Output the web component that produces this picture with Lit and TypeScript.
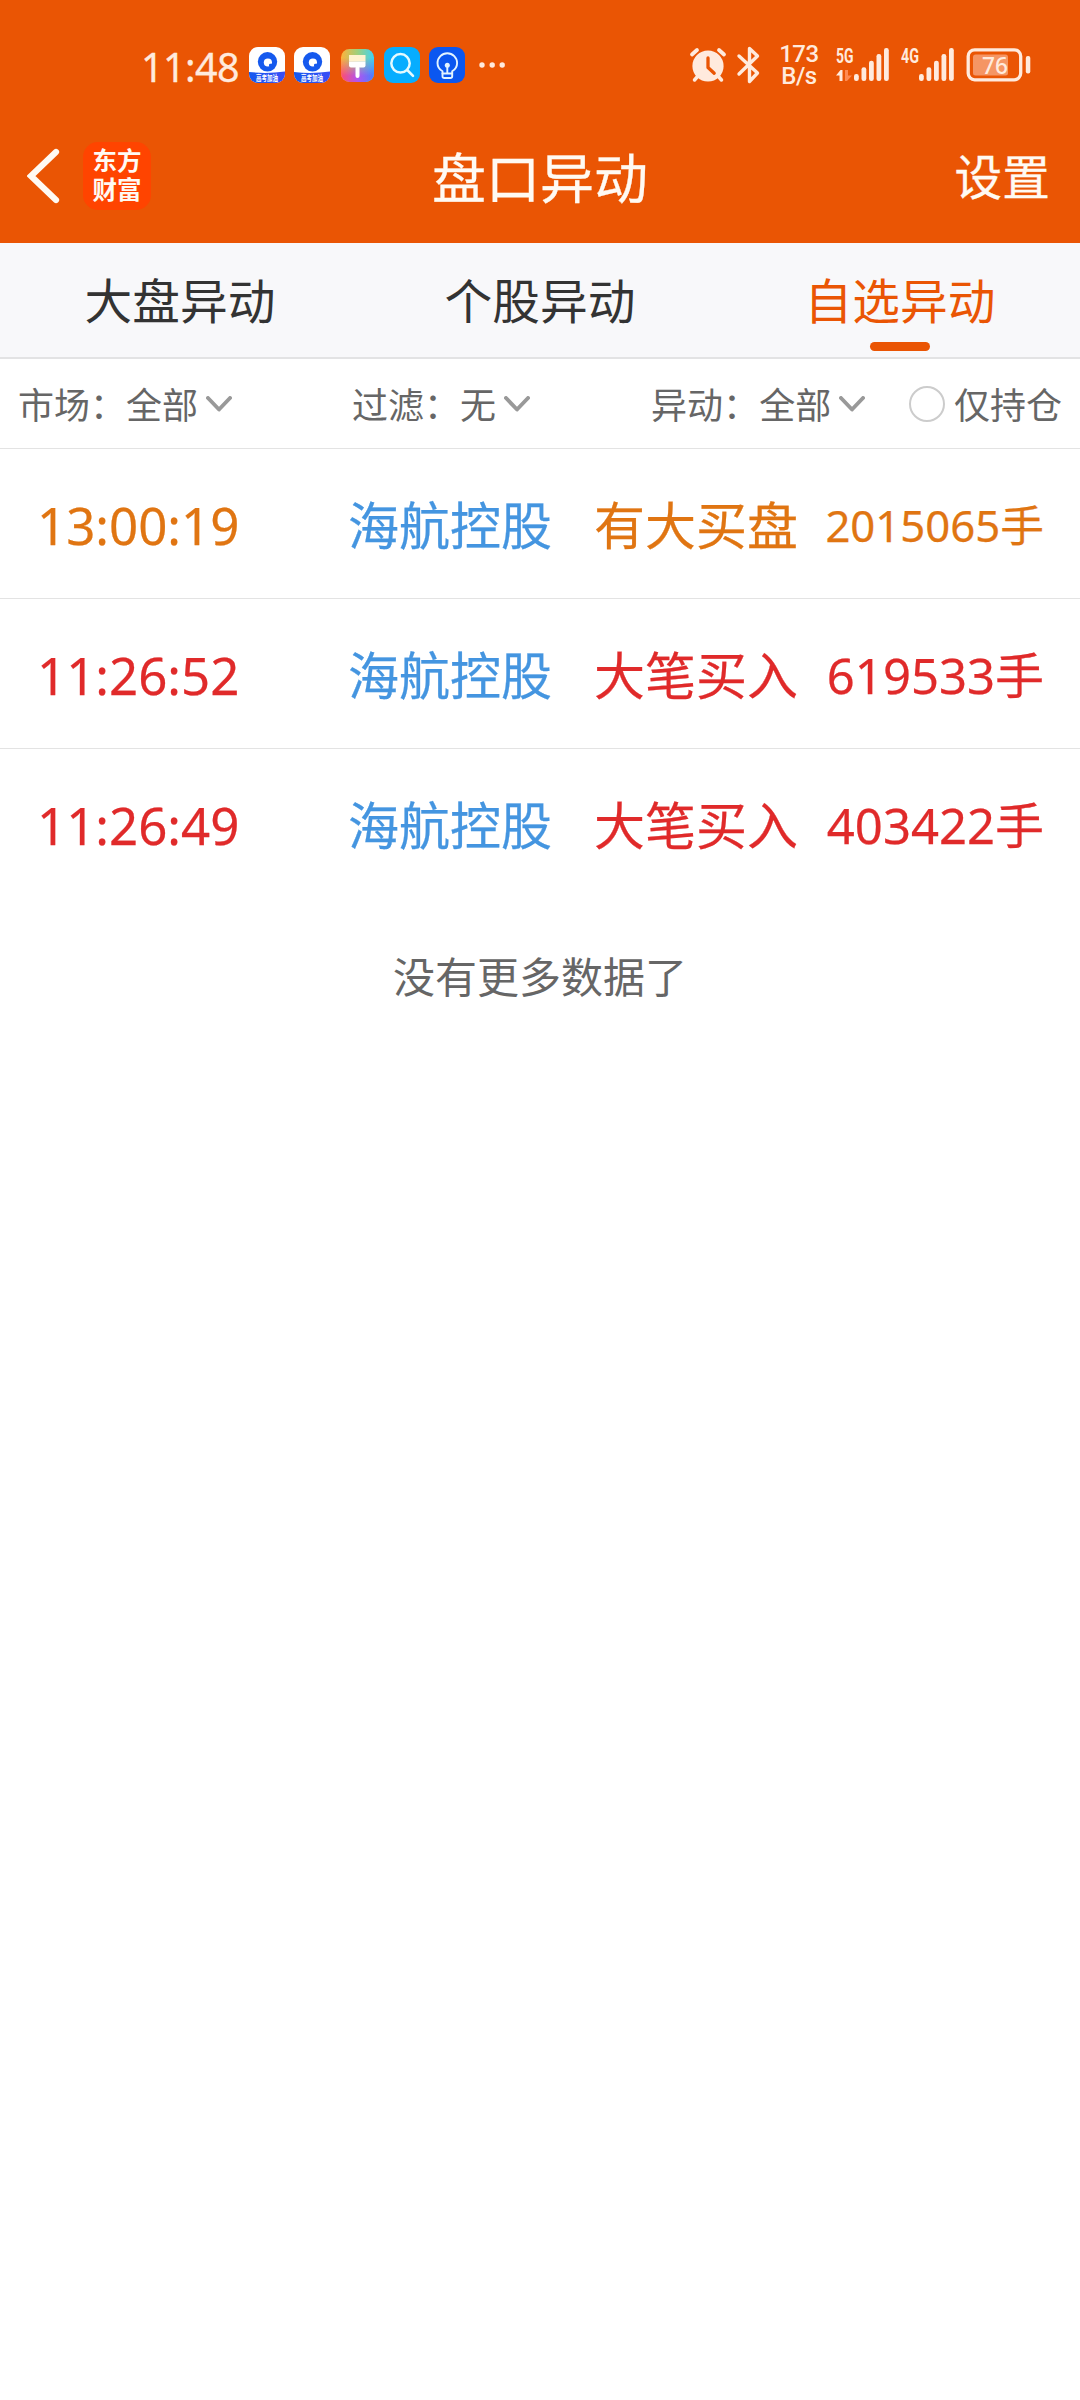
import { LitElement, html, css, svg } from "lit";
import { customElement, property } from "lit/decorators.js";
import { classMap } from "lit/directives/class-map.js";

type Entry = { time: string; name: string; event: string; volume: string; tone: string; compact?: boolean };

const ENTRIES: Entry[] = [
  { time: "13:00:19", name: "海航控股", event: "有大买盘", volume: "2015065手", tone: "amber", compact: true },
  { time: "11:26:52", name: "海航控股", event: "大笔买入", volume: "619533手", tone: "red" },
  { time: "11:26:49", name: "海航控股", event: "大笔买入", volume: "403422手", tone: "red" },
];

const TABS = ["大盘异动", "个股异动", "自选异动"];

const CREAM = "#ffeadd";

@customElement("status-bar")
export class StatusBar extends LitElement {
  static styles = css`
    :host {
      display: flex;
      height: 108px;
      padding: 22px 49px 0 141px;
      box-sizing: border-box;
      align-items: center;
      color: #ffeadd;
      font-family: "Noto Sans", "Noto Sans CJK SC", sans-serif;
    }
    svg { display: block; flex: none; overflow: visible; }
    .clock {
      width: 108px;
      padding-top: 3px;
      font-size: 39.5px;
      line-height: 44px;
      letter-spacing: -0.6px;
      white-space: nowrap;
      -webkit-text-stroke: 0.3px #ffeadd;
    }
    .apps { display: flex; align-items: center; gap: 9px; }
    .more { margin-left: 14px; }
    .system { display: flex; align-items: center; margin-left: auto; }
    .bt { margin-left: 11px; }
    .speed { width: 40px; margin: 0 0 0 19px; font: 500 24px/22px Roboto, sans-serif; text-align: center; letter-spacing: -0.4px; }
    .sig5 { margin-left: 17px; }
    .sig4 { margin-left: 12px; }
    .battery { margin-left: 12px; }
    .label { font: 700 20px Roboto, sans-serif; fill: #ffeadd; }
    .level { font: 500 24px "Noto Sans", sans-serif; fill: #ffeadd; }
    .tag { font: 700 7.5px "Noto Sans CJK SC", sans-serif; fill: #fff; }
  `;

  private browserIcon(id: string) {
    return html`<svg width="36" height="36" viewBox="0 0 36 36">
      <defs>
        <clipPath id=${id}><rect width="36" height="36" rx="9"></rect></clipPath>
        <linearGradient id=${id + "g"}><stop stop-color="#1559ee"></stop><stop offset="1" stop-color="#3b4df6"></stop></linearGradient>
      </defs>
      <g clip-path="url(#${id})">
        <rect width="36" height="36" fill="#fff"></rect>
        <path d="M0 25Q18 27 36 24.500V36H0Z" fill="url(#${id}g)"></path>
        <circle cx="18.500" cy="14.800" r="9.700" fill="#1559ee"></circle>
        <circle cx="18.900" cy="15.500" r="4.100" fill="#fff"></circle>
        <path d="M20 19.800V18Q20 16.800 21.200 16.800H23.500V19.800Z" fill="#1559ee"></path>
        <text class="tag" x="18" y="34" text-anchor="middle" textLength="22" lengthAdjust="spacingAndGlyphs" font-style="italic">高考加油</text>
      </g>
    </svg>`;
  }

  private bars() {
    return [7, 13.7, 20.3, 27, 33].map(
      (h, i) => svg`<rect x=${i * 7.5} y=${33 - h} width="4.8" height=${h} rx="2.2" fill=${CREAM}></rect>`
    );
  }

  render() {
    return html`
      <div class="clock">11:48</div>
      <div class="apps">
        ${this.browserIcon("a")} ${this.browserIcon("b")}
        <svg width="36" height="36" viewBox="0 0 36 36">
          <defs>
            <linearGradient id="p1" x1="0" y1="0" x2="1" y2="0"><stop stop-color="#ffb13c"></stop><stop offset=".5" stop-color="#9ed07c"></stop><stop offset="1" stop-color="#3fd3f4"></stop></linearGradient>
            <linearGradient id="p2" x1="0" y1="0" x2="1" y2="0"><stop stop-color="#ff4d6d"></stop><stop offset=".5" stop-color="#b354ee"></stop><stop offset="1" stop-color="#4a7dff"></stop></linearGradient>
            <linearGradient id="pm" x1="0" y1="0" x2="0" y2="1"><stop offset=".3" stop-color="#000"></stop><stop offset=".8" stop-color="#fff"></stop></linearGradient>
            <mask id="pk"><rect width="36" height="36" fill="url(#pm)"></rect></mask>
          </defs>
          <rect x="2" y="2" width="33" height="33" rx="8.5" fill="url(#p1)"></rect>
          <rect x="2" y="2" width="33" height="33" rx="8.5" fill="url(#p2)" mask="url(#pk)"></rect>
          <path d="M10 8H26.500V14.500H10Z" fill="#fff3cf"></path>
          <path d="M10 14.500H26.500V18.500Q26.500 20.500 24.500 20.500H12Q10 20.500 10 18.500Z" fill="#fff"></path>
          <rect x="16.500" y="19" width="4" height="12" rx="2" fill="#fff"></rect>
        </svg>
        <svg width="36" height="36" viewBox="0 0 36 36">
          <rect width="36" height="36" rx="9" fill="#06adff"></rect>
          <circle cx="16.500" cy="16.300" r="9.200" fill="none" stroke="#e4faff" stroke-width="2.500"></circle>
          <path d="M23.200 23L29 28.800" stroke="#e4faff" stroke-width="2.600" stroke-linecap="round"></path>
        </svg>
        <svg width="36" height="36" viewBox="0 0 36 36">
          <rect width="36" height="36" rx="9" fill="#0b57f0"></rect>
          <g fill="none" stroke="#e3f4ff" stroke-width="1.900" stroke-linecap="round" stroke-linejoin="round">
            <path d="M13.500 26.500V24.300Q8.500 21.300 8.500 16a9.800 9.800 0 0 1 19.600 0Q28.100 21.300 23.200 24.300V26.500Z"></path>
            <path d="M13.500 26.500V29.200Q13.500 31 15.300 31H21.300Q23.200 31 23.200 29.200V26.500M18.300 26V19"></path>
          </g>
          <circle cx="18.300" cy="18.300" r="2.500" fill="#e3f4ff"></circle>
        </svg>
      </div>
      <svg class="more" width="26" height="6" viewBox="0 0 26 6" fill=${CREAM}>
        <circle cx="3" cy="3" r="2.700"></circle><circle cx="13.200" cy="3" r="2.700"></circle><circle cx="23.200" cy="3" r="2.700"></circle>
      </svg>
      <div class="system">
        <svg width="36" height="36" viewBox="0 0 36 36">
          <path d="M8 29L4.500 33M28 29L31.500 33" stroke=${CREAM} stroke-width="3.500" stroke-linecap="round"></path>
          <path d="M2 7.500L7 3M34 7.500L29 3" stroke=${CREAM} stroke-width="3.800" stroke-linecap="round"></path>
          <circle cx="18" cy="19" r="15.600" fill=${CREAM}></circle>
          <path d="M18 11V20.500L24.200 26.200" fill="none" stroke="#ea5504" stroke-width="3.300" stroke-linecap="round" stroke-linejoin="round"></path>
        </svg>
        <svg class="bt" width="23" height="38" viewBox="0 0 23 38">
          <path d="M2 10L20.500 27L12.500 35.500V2.500L20.500 10L2 28" fill="none" stroke=${CREAM} stroke-width="3.400" stroke-linecap="round" stroke-linejoin="round"></path>
        </svg>
        <div class="speed"><div>173</div><div>B/s</div></div>
        <svg class="sig5" width="53" height="34" viewBox="0 0 53 34">
          <text class="label" x="0" y="14.500" textLength="17.500" lengthAdjust="spacingAndGlyphs">5G</text>
          <path d="M0 27.500L4.500 22H6.500V33H3.500V27.500Z" fill=${CREAM}></path>
          <path d="M9 22H12V27.500H16L11 33H9Z" fill="#ff8a52"></path>
          <g transform="translate(18)">${this.bars()}</g>
        </svg>
        <svg class="sig4" width="53" height="34" viewBox="0 0 53 34">
          <text class="label" x="0" y="14.500" textLength="18" lengthAdjust="spacingAndGlyphs">4G</text>
          <g transform="translate(18)">${this.bars()}</g>
        </svg>
        <svg class="battery" width="65" height="34" viewBox="0 0 65 34">
          <rect x="2.200" y="1.800" width="52.500" height="30" rx="6.500" fill="none" stroke=${CREAM} stroke-width="3.300"></rect>
          <rect x="7" y="6.500" width="35" height="21" rx="2.500" fill="#f59564"></rect>
          <text class="level" x="16" y="26" textLength="26" lengthAdjust="spacingAndGlyphs">76</text>
          <rect x="59.800" y="8" width="4.500" height="17.500" rx="2" fill=${CREAM}></rect>
        </svg>
      </div>
    `;
  }
}

@customElement("filter-select")
export class FilterSelect extends LitElement {
  @property() label = "";
  @property() value = "";

  static styles = css`
    :host { display: flex; align-items: center; white-space: nowrap; }
    .text { padding-bottom: 2px; }
    .chevron { display: block; margin-left: 8px; }
  `;

  render() {
    return html`<span class="text">${this.label}：${this.value}</span>
      <svg class="chevron" width="26" height="16" viewBox="0 0 26 16">
        <path d="M2 2L13 13.500L24 2" fill="none" stroke="#999" stroke-width="3.900" stroke-linecap="round" stroke-linejoin="round"></path>
      </svg>`;
  }
}

@customElement("app-root")
export class AppRoot extends LitElement {
  static styles = css`
    :host {
      display: block;
      min-height: 2400px;
      background: #fff;
      font-family: "Noto Sans", "Noto Sans CJK SC", sans-serif;
    }
    svg { display: block; }
    .top { background: #ea5504; height: 243px; color: #fffaf3; }
    .nav {
      display: grid;
      grid-template-columns: 1fr auto 1fr;
      align-items: center;
      height: 135px;
      padding: 0 30px 0 27px;
      font-family: "Noto Sans CJK SC", sans-serif;
    }
    .left { display: flex; align-items: center; gap: 23px; }
    .logo {
      display: flex;
      flex-direction: column;
      align-items: center;
      justify-content: center;
      width: 68px;
      height: 68px;
      padding-bottom: 3px;
      box-sizing: border-box;
      border-radius: 15px;
      background: #ff4400;
      font: 700 24.5px/29px "Noto Sans CJK SC", sans-serif;
    }
    .title { font-size: 54px; line-height: 70px; padding-left: 3px; -webkit-text-stroke: 0.3px #fffaf3; }
    .action { justify-self: end; margin-top: -2px; font-size: 47.7px; line-height: 64px; -webkit-text-stroke: 0.3px #fffaf3; }
    .tabs {
      display: grid;
      grid-template-columns: repeat(3, 1fr);
      height: 114px;
      background: #f8f8fa;
      border-bottom: 2px solid #e3e3e4;
      font: 47.7px/64px "Noto Sans CJK SC", sans-serif;
      color: #333;
      box-sizing: content-box;
    }
    .tab { display: flex; flex-direction: column; align-items: center; padding-top: 24px; }
    .tab.active { color: #ea5504; }
    .tab.active::after { content: ""; width: 60px; height: 9px; margin-top: 11px; border-radius: 4.5px; background: #ea5504; }
    .filters {
      display: flex;
      align-items: center;
      height: 89px;
      padding: 0 18px;
      border-bottom: 1px solid #e3e3e3;
      font: 36px/50px "Noto Sans CJK SC", sans-serif;
      color: #666;
    }
    .f2 { margin-left: 120px; }
    .f3 { margin-left: 121px; }
    .check { display: flex; align-items: center; gap: 9px; margin-left: auto; white-space: nowrap; }
    .check .hold { padding-bottom: 2px; }
    .ring { width: 36px; height: 36px; box-sizing: border-box; border: 2.5px solid #ccc; border-radius: 50%; }
    .row {
      display: grid;
      grid-template-columns: 312px 247px 204px 1fr;
      align-items: center;
      height: 150px;
      padding: 2px 36px 0 37px;
      box-sizing: border-box;
      border-bottom: 1px solid #e3e3e3;
      font-size: 51px;
      line-height: 70px;
      white-space: nowrap;
      -webkit-text-stroke: 0.25px currentColor;
    }
    .row:last-of-type { border-bottom-color: transparent; }
    .amber { color: #e07512; }
    .red { color: #e02a2a; }
    .name { color: #4495e0; margin-left: -1px; }
    .event { margin-left: -2px; }
    .volume { text-align: right; font-size: 49px; }
    .volume.compact { font-size: 43.7px; }
    .end { padding-top: 46px; font: 42px/60px "Noto Sans CJK SC", sans-serif; color: #666; text-align: center; }
  `;

  render() {
    return html`
      <header class="top">
        <status-bar></status-bar>
        <div class="nav">
          <div class="left">
            <svg width="33" height="56" viewBox="0 0 33 56">
              <path d="M29 4L4 28L29 52" fill="none" stroke="#fffaf3" stroke-width="6.200" stroke-linecap="round"></path>
            </svg>
            <div class="logo"><span>东方</span><span>财富</span></div>
          </div>
          <div class="title">盘口异动</div>
          <div class="action">设置</div>
        </div>
      </header>
      <nav class="tabs">
        ${TABS.map((t, i) => html`<div class=${classMap({ tab: true, active: i === 2 })}>${t}</div>`)}
      </nav>
      <div class="filters">
        <filter-select label="市场" value="全部"></filter-select>
        <filter-select class="f2" label="过滤" value="无"></filter-select>
        <filter-select class="f3" label="异动" value="全部"></filter-select>
        <div class="check"><span class="ring"></span><span class="hold">仅持仓</span></div>
      </div>
      <main>
        ${ENTRIES.map(
          (e) => html`<div class="row ${e.tone}">
            <span>${e.time}</span>
            <span class="name">${e.name}</span>
            <span class="event">${e.event}</span>
            <span class=${classMap({ volume: true, compact: !!e.compact })}>${e.volume}</span>
          </div>`
        )}
      </main>
      <div class="end">没有更多数据了</div>
    `;
  }
}
